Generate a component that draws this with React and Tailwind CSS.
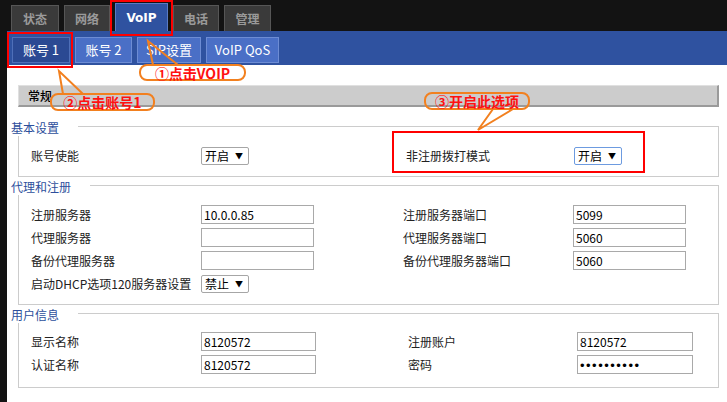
import React from 'react'

const topTabs = [
  { name: '状态', w: 'w-[48px]' },
  { name: '网络', w: 'w-[46px]' },
  { name: 'VoIP', w: 'w-[53px]', active: true },
  { name: '电话', w: 'w-[46px]' },
  { name: '管理', w: 'w-[47px]' },
]

const subTabs = [
  { name: '账号 1', w: 'w-[58px]', active: true },
  { name: '账号 2', w: 'w-[57px]' },
  { name: 'SIP设置', w: 'w-[64px]' },
  { name: 'VoIP QoS', w: 'w-[73px]' },
]

const TextBox = ({ value, w = 'w-[113px]' }) => (
  <div className={`${w} h-[19px] border border-[#a9a9a9] bg-white pl-[2px] text-[12px] leading-[17px] text-black`}>
    {value}
  </div>
)

const SelectBox = ({ value, focus }) => (
  <div
    className={`flex h-[18px] w-[48px] items-center justify-between rounded-[2px] border bg-white pl-[3px] pr-[5px] text-[12px] leading-[16px] text-black ${
      focus ? 'border-[#6d9be0]' : 'border-[#a6a6a6]'
    }`}
  >
    <span>{value}</span>
    <span className="text-[8px]">▼</span>
  </div>
)

const Fieldset = ({ legend, className, children }) => (
  <div className={`relative w-[701px] border border-[#cccccc] pl-[12px] ${className}`}>
    <span className="absolute -left-[8px] -top-[7px] bg-white pr-[19px] text-[12px] leading-[16px] text-[#2d4f9c]">
      {legend}
    </span>
    {children}
  </div>
)

const Row = ({ l1, c1, l2, c2, w1 = 'w-[170px]', w2 = 'w-[202px]', w3 = 'w-[170px]' }) => (
  <div className="flex h-[19px] items-center text-[12px] text-[#222]">
    <div className={w1}>{l1}</div>
    <div className={w2}>{c1}</div>
    <div className={w3}>{l2}</div>
    <div>{c2}</div>
  </div>
)

const Callout = ({ text, className }) => (
  <div
    className={`absolute flex items-center justify-center rounded-[8px] border-2 border-[#f2801f] text-[14px] font-bold leading-none text-[#ff1010] ${className}`}
  >
    {text}
  </div>
)

export default function App() {
  return (
    <div className="relative h-[402px] w-[727px] overflow-hidden bg-[#131313] font-['Noto_Sans_CJK_SC',sans-serif]">
      {/* top tabs */}
      <div className="flex h-[31px] items-end gap-[5px] pl-[11px]">
        {topTabs.map((t) =>
          t.active ? (
            <div
              key={t.name}
              className={`${t.w} flex h-[28px] items-center justify-center border border-b-0 border-[#5a7bc4] bg-[#2f52a0] font-['DejaVu_Sans',sans-serif] text-[12px] font-bold text-white`}
            >
              {t.name}
            </div>
          ) : (
            <div
              key={t.name}
              className={`${t.w} flex h-[26px] items-center justify-center border border-b-0 border-[#565656] bg-[#3a3a3a] text-[12px] font-bold text-[#9a9a9a]`}
            >
              {t.name}
            </div>
          )
        )}
      </div>

      {/* sub tabs */}
      <div className="ml-[7px] flex h-[34px] gap-[5px] bg-[#2f52a0] pl-[5px] pt-[6px]">
        {subTabs.map((t) => (
          <div
            key={t.name}
            className={`${t.w} flex h-[26px] items-center justify-center border text-[13px] text-white ${
              t.active ? 'border-[#4f6fb8] bg-[#2b4993]' : 'border-[#6d8cd4] bg-[#4a6fc6]'
            }`}
          >
            {t.name}
          </div>
        ))}
      </div>

      {/* content */}
      <div className="ml-[7px] h-[337px] bg-white pl-[11px] pt-[20px]">
        <div className="flex h-[22px] w-[701px] items-center border-t border-l border-[#e0e0e0] border-r-2 border-b-2 border-r-[#9a9a9a] border-b-[#9a9a9a] bg-[#cccccc] pl-[9px] text-[12px] font-medium text-black">
          常规
        </div>

        <Fieldset legend="基本设置" className="mt-[19px] h-[51px] pt-[19px]">
          <Row
            l1="账号使能"
            c1={<SelectBox value="开启" />}
            l2="非注册拨打模式"
            c2={<SelectBox value="开启" focus />}
            w2="w-[205px]"
            w3="w-[168px]"
          />
        </Fieldset>

        <Fieldset legend="代理和注册" className="mt-[8px] h-[120px] pt-[19px]">
          <div className="flex flex-col gap-[4px]">
            <Row l1="注册服务器" c1={<TextBox value="10.0.0.85" />} l2="注册服务器端口" c2={<TextBox value="5099" />} />
            <Row l1="代理服务器" c1={<TextBox value="" />} l2="代理服务器端口" c2={<TextBox value="5060" />} />
            <Row l1="备份代理服务器" c1={<TextBox value="" />} l2="备份代理服务器端口" c2={<TextBox value="5060" />} />
            <Row l1="启动DHCP选项120服务器设置" c1={<SelectBox value="禁止" />} l2="" c2={null} />
          </div>
        </Fieldset>

        <Fieldset legend="用户信息" className="mt-[8px] h-[75px] pt-[18px]">
          <div className="flex flex-col gap-[4px]">
            <Row
              l1="显示名称"
              c1={<TextBox value="8120572" w="w-[115px]" />}
              l2="注册账户"
              c2={<TextBox value="8120572" w="w-[116px]" />}
              w2="w-[207px]"
              w3="w-[169px]"
            />
            <Row
              l1="认证名称"
              c1={<TextBox value="8120572" w="w-[115px]" />}
              l2="密码"
              c2={
                <TextBox
                  value={<span className="font-['Liberation_Sans',sans-serif] text-[13px] tracking-[1.5px]">••••••••••</span>}
                  w="w-[116px]"
                />
              }
              w2="w-[207px]"
              w3="w-[169px]"
            />
          </div>
        </Fieldset>
      </div>

      {/* annotations */}
      <div className="absolute left-[110px] top-[0px] h-[36px] w-[63px] border-2 border-[#ff0000]" />
      <div className="absolute left-[7px] top-[32px] h-[36px] w-[66px] border-2 border-[#ff0000]" />
      <div className="absolute left-[392px] top-[131px] h-[42px] w-[253px] border-2 border-[#ff0000]" />

      <svg className="pointer-events-none absolute left-0 top-0" width="727" height="402">
        <polyline points="153,65 148,41 178,65" fill="none" stroke="#f2801f" strokeWidth="2" />
        <polyline points="63,94 59,71 83,94" fill="none" stroke="#f2801f" strokeWidth="2" />
        <polyline points="493,109 478,130 513,109" fill="none" stroke="#f2801f" strokeWidth="2" />
      </svg>

      <Callout text="①点击VOIP" className="left-[139px] top-[64px] h-[17px] w-[107px]" />
      <Callout text="②点击账号1" className="left-[50px] top-[93px] h-[18px] w-[105px]" />
      <Callout text="③开启此选项" className="left-[424px] top-[92px] h-[18px] w-[106px]" />
    </div>
  )
}
